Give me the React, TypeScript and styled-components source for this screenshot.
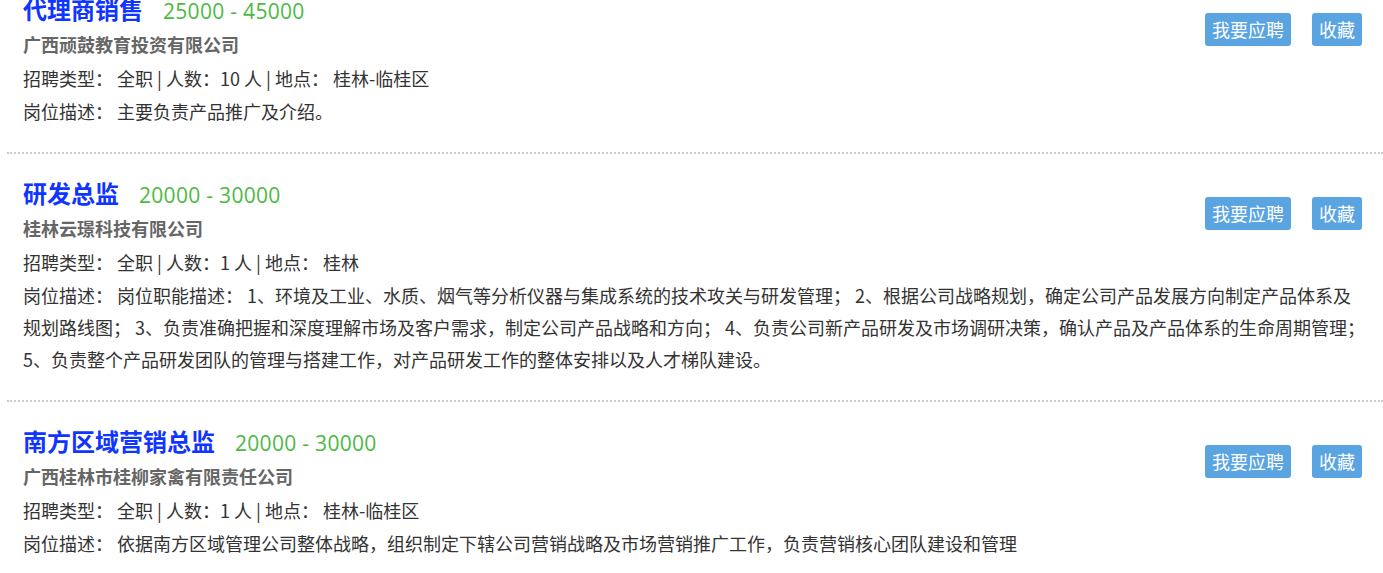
import { createGlobalStyle, styled } from "styled-components";
import { FC } from "react";

interface Job {
  id: number;
  title: string;
  salary: string;
  company: string;
  type: string;
  count: number;
  place: string;
  desc: string;
}

const jobs: Job[] = [
  {
    id: 1,
    title: "代理商销售",
    salary: "25000 - 45000",
    company: "广西顽鼓教育投资有限公司",
    type: "全职",
    count: 10,
    place: "桂林-临桂区",
    desc: "主要负责产品推广及介绍。",
  },
  {
    id: 2,
    title: "研发总监",
    salary: "20000 - 30000",
    company: "桂林云璟科技有限公司",
    type: "全职",
    count: 1,
    place: "桂林",
    desc: "岗位职能描述： 1、环境及工业、水质、烟气等分析仪器与集成系统的技术攻关与研发管理； 2、根据公司战略规划，确定公司产品发展方向制定产品体系及规划路线图； 3、负责准确把握和深度理解市场及客户需求，制定公司产品战略和方向； 4、负责公司新产品研发及市场调研决策，确认产品及产品体系的生命周期管理； 5、负责整个产品研发团队的管理与搭建工作，对产品研发工作的整体安排以及人才梯队建设。",
  },
  {
    id: 3,
    title: "南方区域营销总监",
    salary: "20000 - 30000",
    company: "广西桂林市桂柳家禽有限责任公司",
    type: "全职",
    count: 1,
    place: "桂林-临桂区",
    desc: "依据南方区域管理公司整体战略，组织制定下辖公司营销战略及市场营销推广工作，负责营销核心团队建设和管理",
  },
];

const GlobalStyle = createGlobalStyle`
  html, body {
    margin: 0;
    padding: 0;
    background: #fff;
    overflow: hidden;
  }
  body {
    font-family: "Noto Sans CJK SC", "Noto Sans", sans-serif;
    color: #333;
  }
`;

const JobItem: FC<{ job: Job }> = ({ job }) => (
  <Item>
    <Actions>
      <ActionButton>我要应聘</ActionButton>
      <ActionButton>收藏</ActionButton>
    </Actions>
    <TitleRow>
      <Title>{job.title}</Title>
      <Salary>{job.salary}</Salary>
    </TitleRow>
    <Company>{job.company}</Company>
    <Info>
      招聘类型： {job.type} | 人数：{job.count} 人 | 地点： {job.place}
    </Info>
    <Desc>岗位描述： {job.desc}</Desc>
  </Item>
);

export default function App() {
  return (
    <>
      <GlobalStyle />
      <List>
        {jobs.map((job) => (
          <JobItem key={job.id} job={job} />
        ))}
      </List>
    </>
  );
}

// the list is shown scrolled a little, so the first row starts above the top edge
const List = styled.div`
  margin: -30px 0 0 7px;
`;

const Item = styled.div`
  padding: 22px 15px 25px 16px;
  border-bottom: 2px dotted #ccc;
  &::after {
    content: "";
    display: block;
    clear: both;
  }
`;

const Actions = styled.div`
  float: right;
  display: flex;
  gap: 21px;
  margin: 21px 6px 0 0;
`;

const ActionButton = styled.span`
  display: inline-block;
  height: 33px;
  line-height: 33px;
  padding: 0 7px;
  background: #5ba4e2;
  color: #fff;
  font-size: 18px;
  border-radius: 3px;
  cursor: pointer;
`;

const TitleRow = styled.div`
  display: flex;
  align-items: baseline;
  gap: 20px;
  height: 35px;
  line-height: 34px;
`;

const Title = styled.span`
  font-size: 24px;
  font-weight: bold;
  color: #0f35ff;
`;

const Salary = styled.span`
  font-family: "Open Sans", "Noto Sans", sans-serif;
  font-size: 21px;
  color: #4cb944;
  letter-spacing: 0.3px;
`;

const Company = styled.div`
  font-size: 18px;
  line-height: 34px;
  font-weight: bold;
  color: #666;
`;

const Info = styled.div`
  font-size: 18px;
  line-height: 34px;
`;

const Desc = styled.div`
  font-size: 18px;
  line-height: 32px;
`;
